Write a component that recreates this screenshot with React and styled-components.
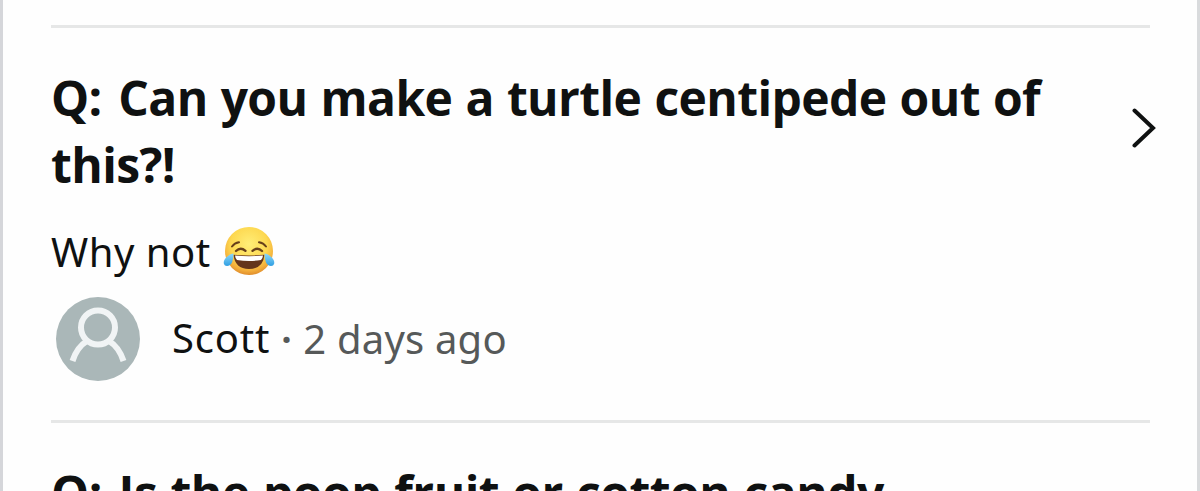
import React from 'react'
import styled, { createGlobalStyle } from 'styled-components'

const GlobalStyle = createGlobalStyle`
    * {
        box-sizing: border-box;
    }

    body {
        margin: 0;
        background-color: #fefefe;
        font-family: 'Noto Sans', sans-serif;
        color: #0f1111;
    }
`

const Page = styled.div`
    height: 491px;
    overflow: hidden;
    padding: 25px 47px 0 48px;
    border-left: 3px solid #d5d6da;
    border-right: 3px solid #d9dbdd;
`

const Item = styled.article`
    height: 395px;
    padding-top: 36px;
    border-top: 3px solid #e6e7e7;
`

const QuestionRow = styled.div`
    display: flex;
    align-items: center;
    justify-content: space-between;
    margin-right: -6px;
`

const Question = styled.h2`
    margin: 0;
    font-family: 'Open Sans', 'Noto Sans', sans-serif;
    font-size: 48px;
    line-height: 67px;
    font-weight: 700;
    white-space: nowrap;
    letter-spacing: ${props => props.$spacing || '-0.6px'};
    word-spacing: 1.2px;
`

const Prefix = styled.span`
    margin-right: 3.5px;
`

const Chevron = styled.svg`
    flex: none;
    width: 24px;
    height: 40px;
    margin-top: -7px;
`

const Answer = styled.p`
    display: flex;
    align-items: center;
    gap: 12px;
    height: 56px;
    margin: 26px 0 0;
    font-size: 40px;
    line-height: 56px;
    letter-spacing: 0.5px;
`

const Emoji = styled.svg`
    width: 52px;
    height: 50px;
    margin-top: -2px;
`

const Author = styled.div`
    display: flex;
    align-items: center;
    height: 84px;
    margin: 17px 0 0 5px;
    font-size: 40px;
    line-height: 56px;
    white-space: pre;
`

const Avatar = styled.svg`
    width: 84px;
    height: 84px;
    margin-right: 32px;
`

const Name = styled.span`
    padding-bottom: 2px;
    letter-spacing: 0.8px;
`

const Muted = styled.span`
    color: #565959;
    letter-spacing: 0.2px;
`

const Dot = styled(Muted)`
    font-weight: 600;
    letter-spacing: 0.4px;
`

const JoyFace = () => (
    <Emoji viewBox="0 0 52 50" role="img" aria-label="face with tears of joy">
        <defs>
            <radialGradient id="skin" cx="0.5" cy="0.36" r="0.64">
                <stop offset="0" stopColor="#ffee78" />
                <stop offset="0.6" stopColor="#fdd850" />
                <stop offset="0.85" stopColor="#f4b03c" />
                <stop offset="1" stopColor="#e08d2c" />
            </radialGradient>
            <linearGradient id="tear" x1="0" y1="0" x2="0" y2="1">
                <stop offset="0" stopColor="#8fd8f8" />
                <stop offset="1" stopColor="#2f9fe3" />
            </linearGradient>
        </defs>
        <circle cx="26" cy="25" r="24" fill="url(#skin)" />
        <g fill="none" stroke="#68401a" strokeLinecap="round">
            <path d="M9 20.5 Q11.5 17 16 16.3" strokeWidth="2" />
            <path d="M43 20.5 Q40.5 17 36 16.3" strokeWidth="2" />
            <path d="M13 25 Q17.5 20.6 22.5 24.8" strokeWidth="2.4" />
            <path d="M29.5 24.8 Q34.5 20.6 39 25" strokeWidth="2.4" />
        </g>
        <path d="M10.5 28.8 Q26 30 41.5 28.8 Q40 43 26 43 Q12 43 10.5 28.8Z" fill="#65351b" />
        <path d="M12 29.6 Q26 30.8 40 29.6 Q39.8 32.5 38 34 Q26 36 14 34 Q12.2 32.5 12 29.6Z" fill="#fff" />
        <path d="M10.5 27.5 C6 28 0 33 0.8 37.5 C1.8 41.5 7.5 40.5 9.2 36 Q10.6 31.5 10.5 27.5Z" fill="url(#tear)" />
        <path d="M41.5 27.5 C46 28 52 33 51.2 37.5 C50.2 41.5 44.5 40.5 42.8 36 Q41.4 31.5 41.5 27.5Z" fill="url(#tear)" />
    </Emoji>
)

const App = () => {
    return (
        <>
            <GlobalStyle />
            <Page>
                <Item>
                    <QuestionRow>
                        <Question>
                            <Prefix>Q:</Prefix> Can you make a turtle centipede out of
                            <br />
                            this?!
                        </Question>
                        <Chevron viewBox="0 0 24 40">
                            <path d="M2.5 2.5 L21 20 L2.5 37.5" fill="none" stroke="#0f1111" strokeWidth="4" strokeLinecap="round" />
                        </Chevron>
                    </QuestionRow>
                    <Answer>
                        Why not
                        <JoyFace />
                    </Answer>
                    <Author>
                        <Avatar viewBox="0 0 84 84">
                            <circle cx="42" cy="42" r="42" fill="#aab7b8" />
                            <g fill="none" stroke="#f1f4f5" strokeWidth="6">
                                <circle cx="42" cy="30.5" r="17" />
                                <path d="M16.5 64 Q21 50 31 44 M67.5 64 Q63 50 53 44" />
                            </g>
                        </Avatar>
                        <Name>Scott</Name>
                        <Dot> · </Dot>
                        <Muted>2 days ago</Muted>
                    </Author>
                </Item>
                <Item>
                    <Question $spacing="-0.5px">
                        <Prefix>Q:</Prefix> Is the poop fruit or cotton candy
                    </Question>
                </Item>
            </Page>
        </>
    )
}

export default App
